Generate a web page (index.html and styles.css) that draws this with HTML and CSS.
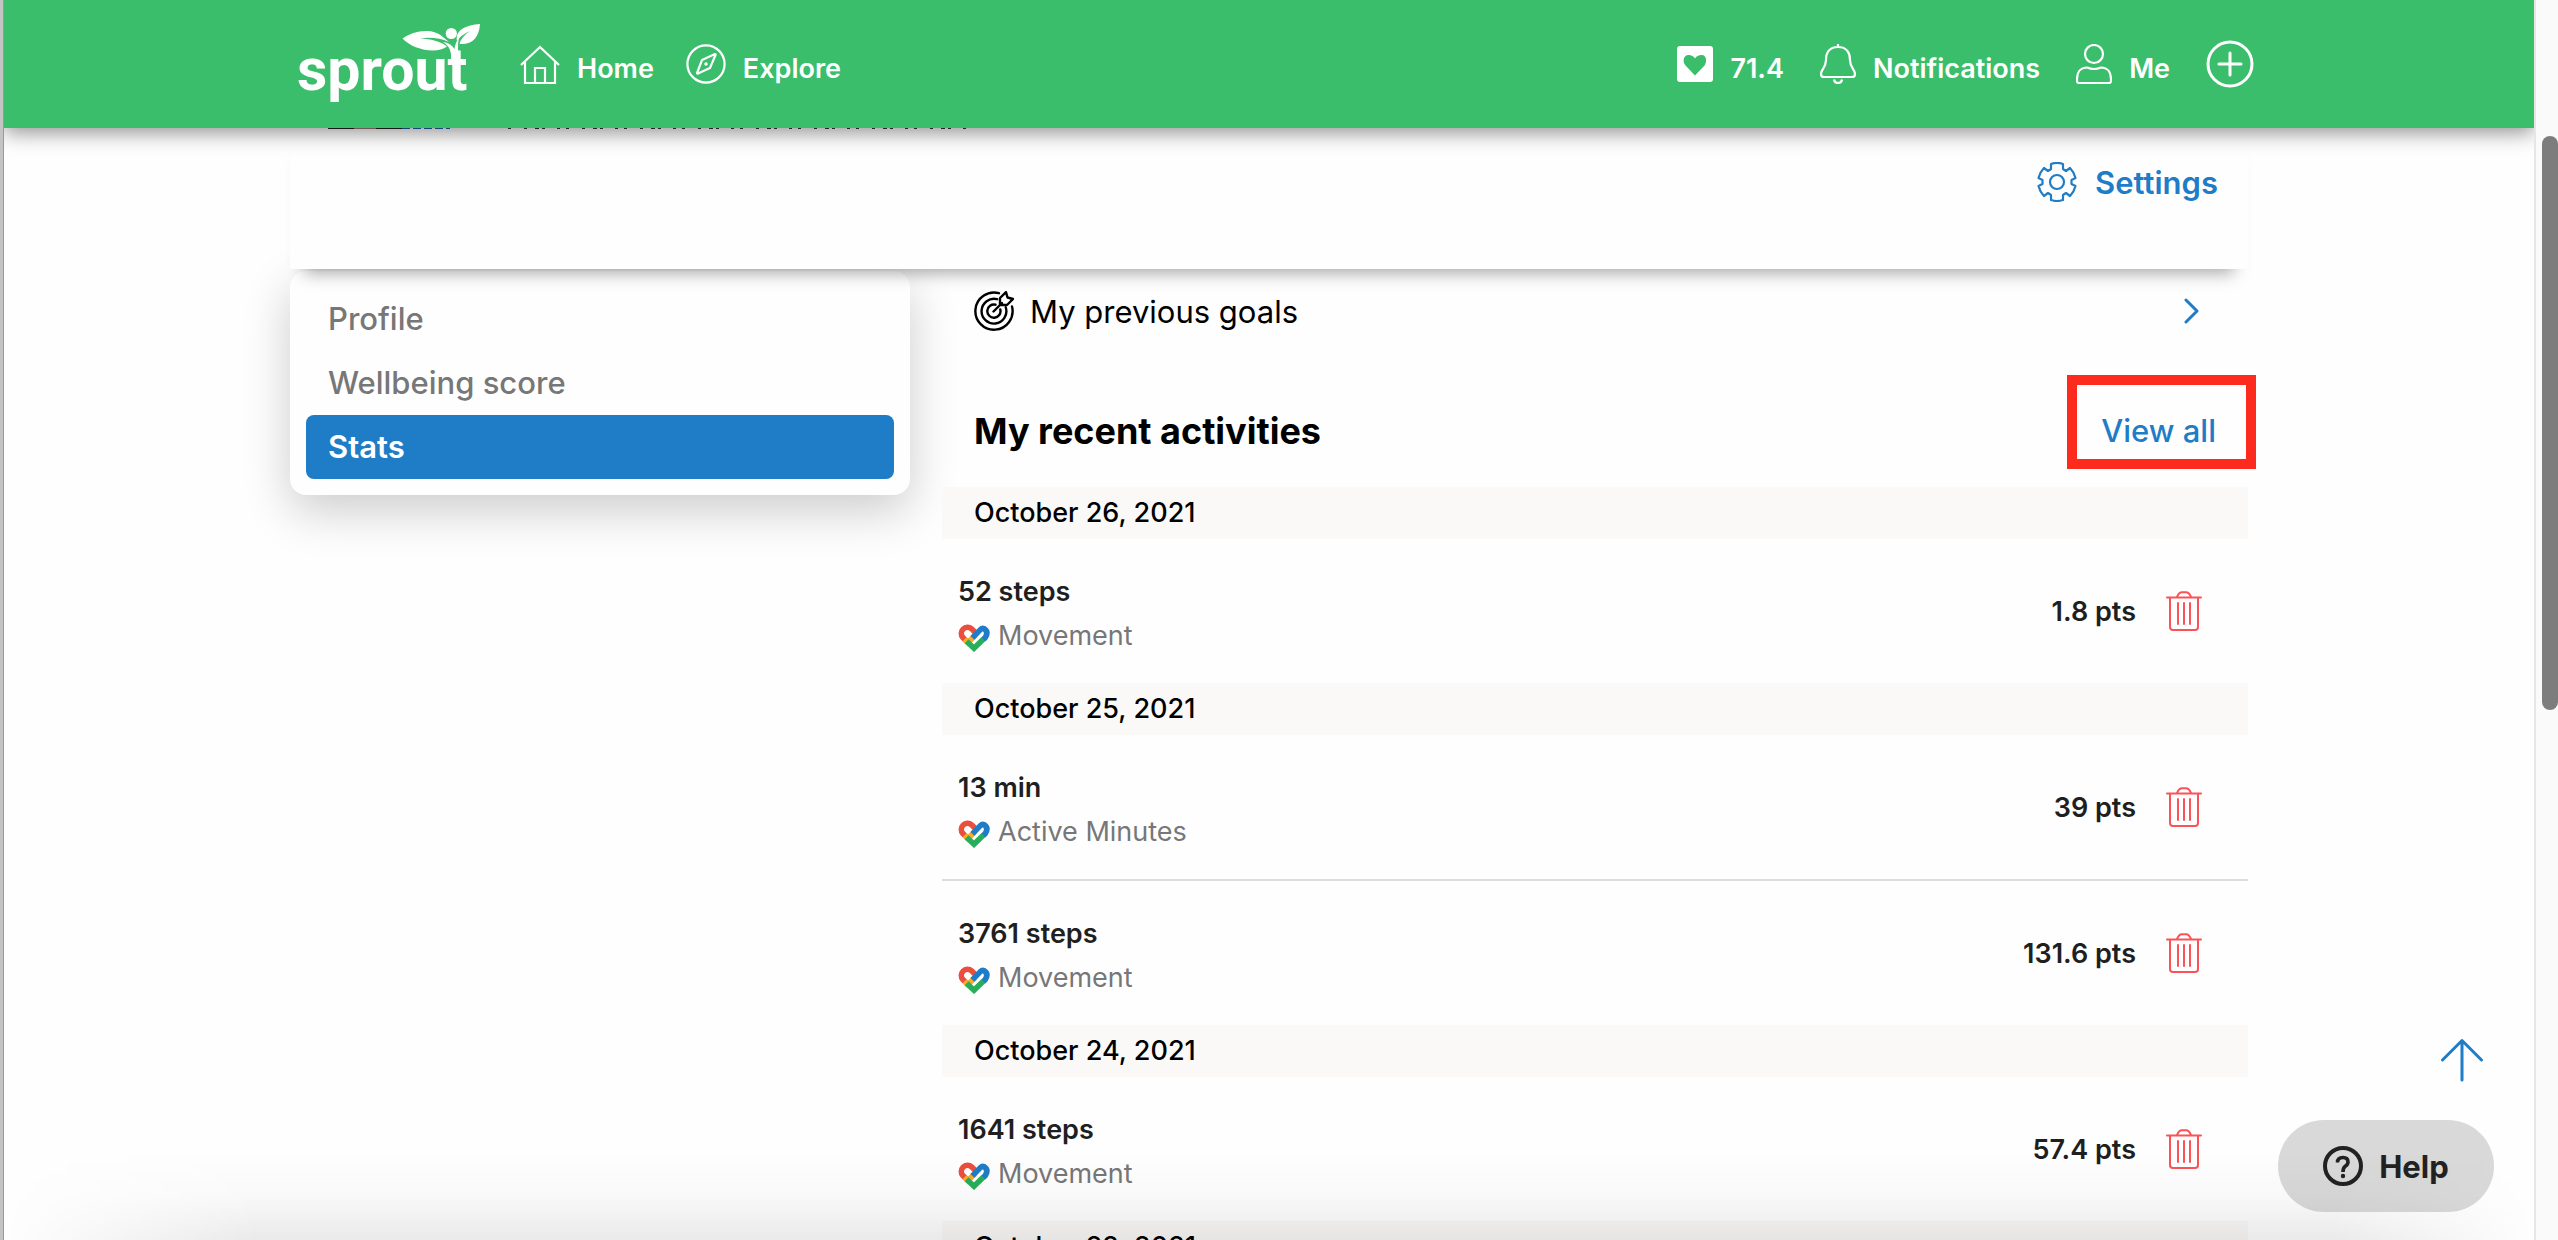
FILE: index.html
```html
<!DOCTYPE html>
<html lang="en">
<head>
<meta charset="utf-8">
<title>Sprout - Stats</title>
<link rel="stylesheet" href="styles.css">
</head>
<body>
<svg class="sprite" aria-hidden="true">
  <symbol id="fit" viewBox="0 0 32 28">
    <g fill="none" stroke-width="5.6">
      <path d="M10 18.6 4.9 13.6A6.2 6.2 0 0 1 13.6 4.8L17 8.2" stroke="#ea4f3d"/>
      <path d="M6.500 15.200 10 18.600 17 11.600" stroke="#f9ab2d"/>
      <path d="M14.400 13.900 22.400 5.600Q24 4 26 4.600Q31 8 27.200 13.600L25 15.800" stroke="#1f7cc6"/>
      <path d="M8.600 17.200 16 24.200 25.200 15.300" stroke="#27ae5a"/>
    </g>
  </symbol>
  <symbol id="trash" viewBox="0 0 36 40">
    <path d="M1 6.500H35M4 6.500V36Q4 39 7 39H29Q32 39 32 36V6.500M11 6Q13 1.200 16 1.200H20Q23 1.200 25 6M12 12V33M18 12V33M24 12V33" fill="none" stroke="#fb5258" stroke-width="2" stroke-linecap="round"/>
  </symbol>
</svg>
<div class="window">
  <div class="desktop-edge"></div>
  <div class="page">
    <header class="topbar">
      <div class="container topbar-inner">
        <a class="logo" href="#" aria-label="sprout">
          <svg width="184" height="84" viewBox="0 0 184 84" fill="#fff">
            <text class="logo-word" x="-1" y="68">sprout</text>
            <path d="M104.500 16.500C115 9 134 5 145 15L151 20C142 16 132 15 122 16.500C133 17 142 19 149 24.500C138 33 114 27 104.500 16.500Z"/>
            <circle cx="153.300" cy="11.500" r="5.600"/>
            <path d="M182 2C168 3 157 8 159 19Q163 13 172 9Q163 15 161.500 22C174 23 181 16 182 2Z"/>
            <path d="M153 40V32Q152 24 145 20Q153 21 156.500 27Q157 21 161 16Q159 24 161 40Z"/>
          </svg>
        </a>
        <nav class="nav">
          <a class="nav-link" href="#">
            <svg width="40" height="40" viewBox="0 0 40 40" fill="none" stroke="#fff" stroke-width="2.200"><path d="M1 21 20 3 39 21M5 18V39H35V18M15 39V24H25V39"/></svg>
            <span>Home</span>
          </a>
          <a class="nav-link" href="#">
            <svg width="40" height="40" viewBox="0 0 40 40" fill="none" stroke="#fff" stroke-width="2.200"><circle cx="20" cy="20" r="18.600"/><path d="M29 10 16 16 11 29Q11 30 12 29.500L24 24 29.500 11Q30 10 29 10Z"/><circle cx="20" cy="20" r="1" fill="#fff" stroke-width="1.500"/></svg>
            <span>Explore</span>
          </a>
        </nav>
        <nav class="nav nav-user">
          <a class="nav-link" href="#">
            <svg width="36" height="40" viewBox="0 0 36 40"><path d="M3 2H33Q36 2 36 5V35Q36 38 33 38H3Q0 38 0 35V5Q0 2 3 2ZM18 31.500 27.500 21.500C30 18 30 11 24.500 11Q20 11 18 14.500Q16 11 11.500 11C6 11 5.500 18 8.500 21.500Z" fill="#fff" fill-rule="evenodd"/></svg>
            <span>71.4</span>
          </a>
          <a class="nav-link" href="#">
            <svg width="36" height="40" viewBox="0 0 36 40" fill="none" stroke="#fff" stroke-width="2.200"><path d="M18 0V3M18 3C9 3 6 9 6 16C6 24 1 25 1 30Q1 33 4 33H32Q35 33 35 30C35 25 30 24 30 16C30 9 27 3 18 3ZM14 35.500Q14.500 39 18 39Q21.500 39 22 35.500"/></svg>
            <span>Notifications</span>
          </a>
          <a class="nav-link" href="#">
            <svg width="36" height="40" viewBox="0 0 36 40" fill="none" stroke="#fff" stroke-width="2.200"><circle cx="18" cy="10" r="9"/><path d="M11 23.500Q18 26.500 25 23.500C32 23.500 35 29 35 35V37Q35 39 33 39H3Q1 39 1 37V35C1 29 4 23.500 11 23.500Z"/></svg>
            <span>Me</span>
          </a>
          <button class="icon-button" type="button" aria-label="Add">
            <svg width="48" height="48" viewBox="0 0 48 48" fill="none" stroke="#fff" stroke-width="3" stroke-linecap="round"><circle cx="24" cy="24" r="22"/><path d="M24 13V35M13 24H35"/></svg>
          </button>
        </nav>
      </div>
    </header>

    <main class="container">
      <section class="hero">
        <svg class="hero-peek" width="720" height="2" viewBox="0 0 720 2" fill="none" stroke-width="2" aria-hidden="true">
          <path d="M38 0H64M86 0H112" stroke="#222"/><path d="M64 0H86" stroke="#967f76"/>
          <path d="M112 0H160" stroke="#1c64a8" stroke-dasharray="8 3"/>
          <path d="M218 0H680" stroke="#333" stroke-dasharray="3 13 3 8 4 3 3 12 3 6"/>
        </svg>
        <a class="settings" href="#">
          <svg width="40" height="40" viewBox="0 0 40 40" fill="none" stroke="#1f7cc6" stroke-width="2.200" stroke-linejoin="round"><path d="M14 2Q20 0 26 2V7L29 9 33 6Q37 10 38.500 16L34.500 18V22L38.500 24Q37 30 33 34L29 31 26 33V38Q20 40 14 38V33L11 31 7 34Q3 30 1.500 24L5.500 22V18L1.500 16Q3 10 7 6L11 9 14 7Z"/><circle cx="20" cy="20" r="7"/></svg>
          <span>Settings</span>
        </a>
      </section>

      <div class="columns">
        <nav class="sidebar">
          <a href="#">Profile</a>
          <a href="#">Wellbeing score</a>
          <a class="active" href="#" aria-current="page">Stats</a>
        </nav>

        <section class="content">
          <a class="goals" href="#">
            <svg width="40" height="40" viewBox="0 0 40 40" fill="none" stroke="#000" stroke-width="2.400" stroke-linecap="round"><path d="M25 2.200A18.600 18.600 0 1 0 38 15.500M23 8.200A12.400 12.400 0 1 0 31.800 16.500M21.500 13.700A6.600 6.600 0 1 0 26.300 18.500M19.500 20.500 28 12M26 14V7L32 1.200 33.500 6.500 39 8 33 14Z" stroke-linejoin="round"/></svg>
            <span>My previous goals</span>
            <svg class="chevron" width="16" height="26" viewBox="0 0 16 26" fill="none" stroke="#1f7cc6" stroke-width="3" stroke-linecap="round" stroke-linejoin="round"><path d="M2 2 13 13 2 24"/></svg>
          </a>
          <div class="heading">
            <h2>My recent activities</h2>
            <a class="view-all" href="#">View all<span class="highlight"></span></a>
          </div>

          <h3 class="date">October 26, 2021</h3>
          <ul class="activities">
            <li><div class="info"><strong>52 steps</strong><span class="kind"><svg width="32" height="28"><use href="#fit"/></svg>Movement</span></div><span class="points">1.8 pts</span><button class="icon-button" type="button" aria-label="Delete"><svg width="36" height="40"><use href="#trash"/></svg></button></li>
          </ul>
          <h3 class="date">October 25, 2021</h3>
          <ul class="activities">
            <li><div class="info"><strong>13 min</strong><span class="kind"><svg width="32" height="28"><use href="#fit"/></svg>Active Minutes</span></div><span class="points">39 pts</span><button class="icon-button" type="button" aria-label="Delete"><svg width="36" height="40"><use href="#trash"/></svg></button></li>
            <li><div class="info"><strong>3761 steps</strong><span class="kind"><svg width="32" height="28"><use href="#fit"/></svg>Movement</span></div><span class="points">131.6 pts</span><button class="icon-button" type="button" aria-label="Delete"><svg width="36" height="40"><use href="#trash"/></svg></button></li>
          </ul>
          <h3 class="date">October 24, 2021</h3>
          <ul class="activities">
            <li><div class="info"><strong>1641 steps</strong><span class="kind"><svg width="32" height="28"><use href="#fit"/></svg>Movement</span></div><span class="points">57.4 pts</span><button class="icon-button" type="button" aria-label="Delete"><svg width="36" height="40"><use href="#trash"/></svg></button></li>
          </ul>
          <h3 class="date">October 22, 2021</h3>
        </section>
      </div>
    </main>

    <div class="floating">
      <button class="icon-button to-top" type="button" aria-label="Back to top">
        <svg width="44" height="44" viewBox="0 0 44 44" fill="none" stroke="#1f7cc6" stroke-width="3" stroke-linecap="round" stroke-linejoin="round"><path d="M22 42V3M2.500 22 22 2.500 41.500 22"/></svg>
      </button>
      <button class="help" type="button">
        <svg width="40" height="40" viewBox="0 0 40 40" fill="none" stroke="#222" stroke-width="4"><circle cx="20" cy="20" r="18"/><path d="M14.500 16.500Q14.500 11.500 20 11.500Q25 11.500 25 16Q25 18.500 22 20.500Q20 22 20 26" stroke-width="3.600"/><circle cx="20" cy="30" r="2.200" fill="#222" stroke="none"/></svg>
        <span>Help</span>
      </button>
    </div>
    <div class="bottom-fade"></div>
  </div>
  <div class="scrollbar"><div class="thumb"></div></div>
</div>
</body>
</html>
```

FILE: styles.css
```css
* { box-sizing: border-box; }

body {
  margin: 0;
  font-family: Inter, "Liberation Sans", sans-serif;
  font-size: 27px;
  color: #000;
  background: #fefefe;
}

a { color: inherit; text-decoration: none; }
svg { display: block; flex: none; }
.sprite { position: absolute; width: 0; height: 0; }

.window {
  display: grid;
  grid-template-columns: 4px 1fr 24px;
  height: 100vh;
  overflow: hidden;
}

.desktop-edge {
  background: linear-gradient(to right, #c4c4c4 3px, #999 3px);
}

.page {
  position: relative;
  overflow: hidden;
  background: #fefefe;
}

.container {
  width: 100%;
  max-width: 1958px;
  margin: 0 auto;
}

/* Top bar */
.topbar {
  position: relative;
  z-index: 3;
  background: #3abe6b;
  box-shadow: 0 4px 20px rgba(0, 0, 0, 0.45);
}

.topbar-inner {
  display: flex;
  align-items: center;
  height: 128px;
  padding-left: 8px;
}

.logo svg { overflow: visible; }

.logo-word {
  font-family: Roboto, "Liberation Sans", sans-serif;
  font-size: 59px;
  font-weight: 700;
}

.nav {
  display: flex;
  align-items: center;
  gap: 32px;
  margin-left: 38px;
  color: #fff;
  font-weight: 600;
}

.nav-user { margin-left: auto; margin-right: -6px; gap: 36px; }

.nav-link {
  display: flex;
  align-items: center;
  gap: 17px;
}

.nav-link span { padding-top: 8px; }

.icon-button {
  padding: 0;
  border: 0;
  background: none;
  font: inherit;
}

/* Profile header */
.hero {
  position: relative;
  z-index: 2;
  display: flex;
  flex-direction: column;
  height: 141px;
  padding-right: 30px;
  background: #fefefe;
  box-shadow: 0 18px 16px -14px rgba(0, 0, 0, 0.35);
}

.hero-peek { position: relative; z-index: 4; }

.settings {
  display: flex;
  align-items: center;
  align-self: flex-end;
  gap: 18px;
  margin-top: 32px;
  color: #1f7cc6;
  font-size: 31px;
  font-weight: 600;
}

/* Columns */
.columns {
  display: grid;
  grid-template-columns: 620px 1fr;
  align-items: start;
  gap: 32px;
  padding-top: 2px;
}

.sidebar {
  display: grid;
  padding: 16px;
  border-radius: 16px;
  background: #fefefe;
  box-shadow: 0 16px 48px rgba(0, 0, 0, 0.2);
  color: #777;
  font-size: 31px;
  font-weight: 500;
}

.sidebar a {
  padding: 0 22px;
  line-height: 64px;
  border-radius: 8px;
}

.sidebar .active {
  background: #1f7cc6;
  color: #fff;
  font-weight: 600;
}

.goals {
  display: flex;
  align-items: center;
  gap: 16px;
  height: 80px;
  padding: 0 48px 0 32px;
  font-size: 31px;
}

.chevron { margin-left: auto; }

.heading {
  display: flex;
  align-items: center;
  justify-content: space-between;
  height: 112px;
  margin-top: 24px;
  padding: 0 32px;
}

h2 { margin: 0; font-size: 36px; font-weight: 700; }

.view-all {
  position: relative;
  color: #1f7cc6;
  font-size: 31px;
  font-weight: 500;
  line-height: 40px;
}

/* Callout frame drawn over the link */
.highlight {
  position: absolute;
  inset: -36px -40px -18px -34px;
  border: 10px solid #fd2b1d;
}

.date {
  margin: 0;
  padding: 0 32px;
  background: #faf9f8;
  font-size: 27px;
  font-weight: 500;
  line-height: 52px;
}

.activities { margin: 0; padding: 0; list-style: none; }

.activities li {
  display: flex;
  align-items: center;
  gap: 30px;
  height: 144px;
  padding: 0 46px 0 16px;
}

.activities li + li {
  height: 146px;
  border-top: 2px solid #ddd;
}

.info {
  display: grid;
  flex: 1;
  padding-top: 6px;
  line-height: 44px;
}

.info strong, .points { color: #1f1f1f; font-weight: 600; }

.kind {
  display: flex;
  align-items: center;
  gap: 8px;
  color: #777;
}

.kind svg { margin-top: 4px; }

/* Floating controls */
.floating {
  position: absolute;
  right: 40px;
  bottom: 28px;
  z-index: 4;
  display: grid;
  gap: 38px;
}

.to-top { justify-self: end; margin-right: 10px; }

.help {
  display: flex;
  align-items: center;
  justify-content: center;
  gap: 16px;
  width: 216px;
  height: 92px;
  padding: 0;
  border: 0;
  border-radius: 46px;
  background: #d9d9d9;
  color: #222;
  font: 700 31px Inter, "Liberation Sans", sans-serif;
}

.bottom-fade {
  position: absolute;
  right: 0;
  bottom: 0;
  left: 0;
  z-index: 5;
  height: 90px;
  background: linear-gradient(to bottom, transparent, rgba(0, 0, 0, 0.02) 50%, rgba(0, 0, 0, 0.08));
  mask-image: linear-gradient(to right, transparent, #000 10%, #000 92%, transparent);
  pointer-events: none;
}

.scrollbar {
  padding-top: 136px;
  border-left: 2px solid #e6e6e6;
  background: #fafafa;
}

.thumb {
  width: 16px;
  height: 52%;
  margin-left: auto;
  border-radius: 8px;
  background: #7d7d7d;
}
```
